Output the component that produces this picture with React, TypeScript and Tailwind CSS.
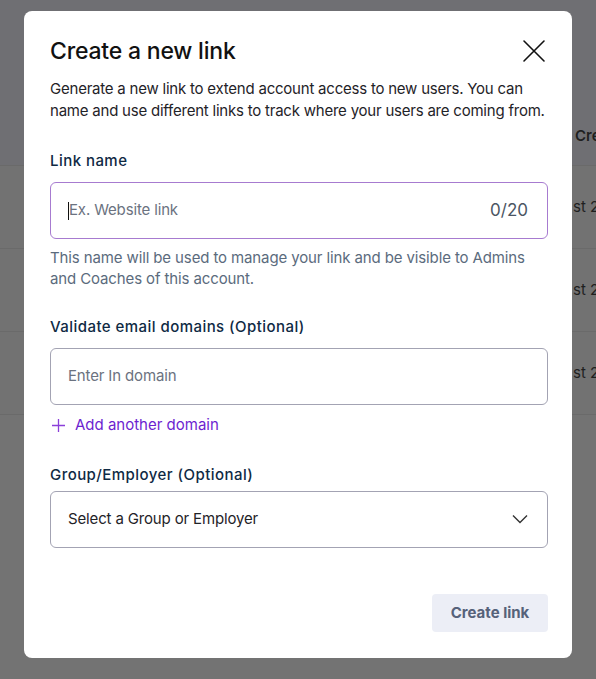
import React from "react";

export default function App() {
  return (
    <div className="relative h-[679px] w-[596px] overflow-hidden bg-[#737373] font-['Inter',sans-serif]">
      {/* background page behind overlay */}
      <div className="flex flex-col">
        <div className="h-[108px] bg-[#6f6f73]" />
        <div className="flex h-[57px] items-center bg-[#6f6f73] pl-[575px]">
          <span className="whitespace-nowrap text-[15px] font-semibold text-[#1f1f1f]">Created</span>
        </div>
        {[0, 1, 2].map((i) => (
          <div key={i} className="flex h-[83px] items-center border-t border-[#6a6a6a] bg-[#727272] pl-[573px]">
            <span className="whitespace-nowrap text-[15px] text-[#1f1f1f]">st 2023</span>
          </div>
        ))}
        <div className="border-t border-[#6a6a6a]" />
      </div>

      {/* modal */}
      <div className="absolute left-[24px] top-[11px] flex h-[647px] w-[548px] flex-col rounded-[8px] bg-white pl-[26px] pr-[24px] pt-[26px] pb-[26px]">
        <div className="flex items-center justify-between">
          <h2 className="text-[23px] font-medium leading-[28px] tracking-[-0.2px] text-[#111]">
            Create a new link
          </h2>
          <svg width="24" height="24" viewBox="0 0 24 24" className="mr-[2px]" fill="none" stroke="#111" strokeWidth="1.6" strokeLinecap="round">
            <path d="M2 2 L22 22 M22 2 L2 22" />
          </svg>
        </div>
        <p className="mt-[13px] text-[15px] leading-[22px] tracking-[-0.22px] text-[#1f2328]">
          Generate a new link to extend account access to new users. You can name and use different links to track where your users are coming from.
        </p>

        <label className="mt-[28px] text-[15px] font-medium leading-[22px] tracking-[0.45px] text-[#0f2a44]">
          Link name
        </label>
        <div className="mt-[10px] flex h-[57px] items-center justify-between rounded-[6px] border border-[#a77bd0] pl-[17px] pr-[19px]">
          <div className="flex items-center">
            <span className="h-[18px] w-[1px] bg-[#111]" />
            <span className="text-[15px] tracking-[-0.15px] text-[#6b7280]">Ex. Website link</span>
          </div>
          <span className="text-[17px] text-[#4b5563]">0/20</span>
        </div>
        <p className="mt-[8px] text-[15px] leading-[21px] tracking-[-0.12px] text-[#5b6b7d]">
          This name will be used to manage your link and be visible to Admins and Coaches of this account.
        </p>

        <label className="mt-[27px] text-[15px] font-medium leading-[22px] tracking-[0.45px] text-[#0f2a44]">
          Validate email domains (Optional)
        </label>
        <div className="mt-[10px] flex h-[57px] items-center rounded-[6px] border border-[#a3a3b3] px-[17px]">
          <span className="text-[15px] tracking-[-0.15px] text-[#6b7280]">Enter In domain</span>
        </div>
        <div className="mt-[9px] flex items-center gap-[10px] pl-[2px]">
          <svg width="13" height="13" viewBox="0 0 13 13" stroke="#8b3fd9" strokeWidth="1.3">
            <path d="M6.5 0 V13 M0 6.5 H13" />
          </svg>
          <span className="text-[15px] text-[#6d1fd0]">Add another domain</span>
        </div>

        <label className="mt-[27px] text-[15px] font-medium leading-[22px] tracking-[0.45px] text-[#0f2a44]">
          Group/Employer (Optional)
        </label>
        <div className="mt-[5px] flex h-[57px] items-center justify-between rounded-[6px] border border-[#a3a3b3] pl-[17px] pr-[19px]">
          <span className="text-[15px] tracking-[-0.15px] text-[#1f2328]">Select a Group or Employer</span>
          <svg width="16" height="10" viewBox="0 0 16 10" fill="none" stroke="#333" strokeWidth="1.4">
            <path d="M1 1.5 L8 8.5 L15 1.5" />
          </svg>
        </div>

        <div className="mt-auto flex justify-end">
          <button className="h-[38px] w-[116px] rounded-[4px] bg-[#eceef6] text-[15px] font-bold text-[#56627a]">
            Create link
          </button>
        </div>
      </div>
    </div>
  );
}
